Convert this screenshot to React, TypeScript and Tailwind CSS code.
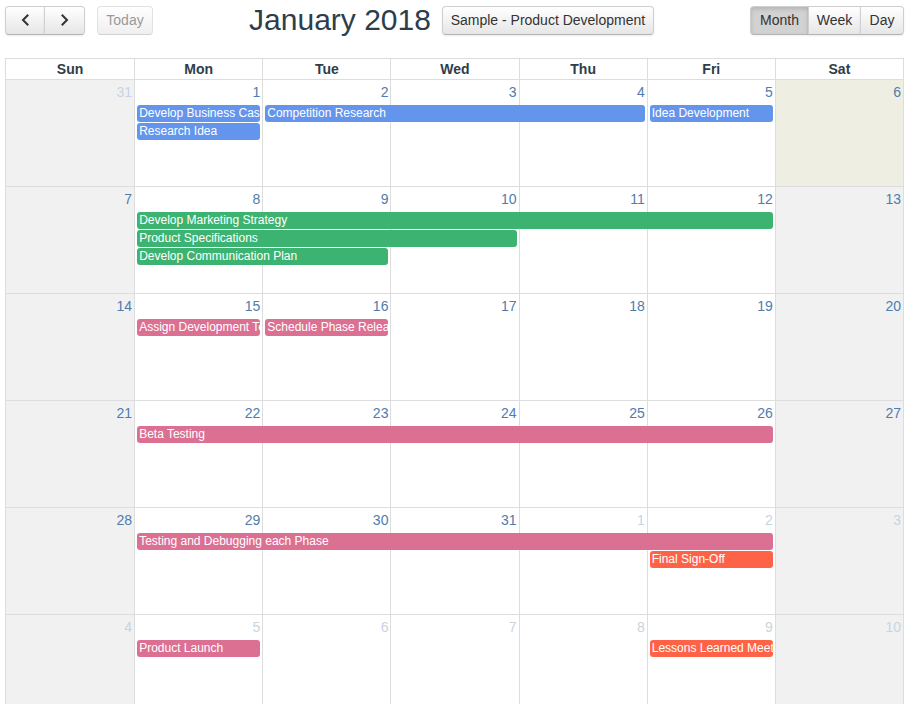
import React from "react";

type Ev = { title: string; start: number; span: number; row: number; color: string };
type Day = { n: number; other?: boolean; today?: boolean };
type Week = { days: Day[]; events: Ev[] };

const BLUE = "bg-[#6495ed]";
const GREEN = "bg-[#3cb371]";
const PINK = "bg-[#db7093]";
const ORANGE = "bg-[#ff6347]";

const colStart = ["", "col-start-1", "col-start-2", "col-start-3", "col-start-4", "col-start-5", "col-start-6", "col-start-7"];
const colSpan = ["", "col-span-1", "col-span-2", "col-span-3", "col-span-4", "col-span-5", "col-span-6", "col-span-7"];
const rowStart = ["", "row-start-1", "row-start-2", "row-start-3", "row-start-4", "row-start-5"];

const d = (n: number, other = false, today = false): Day => ({ n, other, today });

const weeks: Week[] = [
  {
    days: [d(31, true), d(1), d(2), d(3), d(4), d(5), d(6, false, true)],
    events: [
      { title: "Develop Business Case", start: 2, span: 1, row: 2, color: BLUE },
      { title: "Competition Research", start: 3, span: 3, row: 2, color: BLUE },
      { title: "Idea Development", start: 6, span: 1, row: 2, color: BLUE },
      { title: "Research Idea", start: 2, span: 1, row: 3, color: BLUE },
    ],
  },
  {
    days: [d(7), d(8), d(9), d(10), d(11), d(12), d(13)],
    events: [
      { title: "Develop Marketing Strategy", start: 2, span: 5, row: 2, color: GREEN },
      { title: "Product Specifications", start: 2, span: 3, row: 3, color: GREEN },
      { title: "Develop Communication Plan", start: 2, span: 2, row: 4, color: GREEN },
    ],
  },
  {
    days: [d(14), d(15), d(16), d(17), d(18), d(19), d(20)],
    events: [
      { title: "Assign Development Team", start: 2, span: 1, row: 2, color: PINK },
      { title: "Schedule Phase Release", start: 3, span: 1, row: 2, color: PINK },
    ],
  },
  {
    days: [d(21), d(22), d(23), d(24), d(25), d(26), d(27)],
    events: [{ title: "Beta Testing", start: 2, span: 5, row: 2, color: PINK }],
  },
  {
    days: [d(28), d(29), d(30), d(31), d(1, true), d(2, true), d(3, true)],
    events: [
      { title: "Testing and Debugging each Phase", start: 2, span: 5, row: 2, color: PINK },
      { title: "Final Sign-Off", start: 6, span: 1, row: 3, color: ORANGE },
    ],
  },
  {
    days: [d(4, true), d(5, true), d(6, true), d(7, true), d(8, true), d(9, true), d(10, true)],
    events: [
      { title: "Product Launch", start: 2, span: 1, row: 2, color: PINK },
      { title: "Lessons Learned Meeting", start: 6, span: 1, row: 2, color: ORANGE },
    ],
  },
];

const dayNames = ["Sun", "Mon", "Tue", "Wed", "Thu", "Fri", "Sat"];

const btn =
  "h-[29px] px-[10px] text-[14px] leading-none text-[#333] border border-[#cfcfcf] border-b-[#b3b3b3] bg-linear-to-b from-white to-[#e6e6e6] shadow-[inset_0_1px_0_rgba(255,255,255,0.2),0_1px_2px_rgba(0,0,0,0.08)] flex items-center justify-center whitespace-nowrap";

function Chevron({ dir }: { dir: "left" | "right" }) {
  return (
    <svg width="9" height="12" viewBox="0 0 9 12" fill="none">
      <path
        d={dir === "left" ? "M6.5 1.5 L2 6 L6.5 10.5" : "M2.5 1.5 L7 6 L2.5 10.5"}
        stroke="#333"
        strokeWidth="2"
        strokeLinecap="square"
      />
    </svg>
  );
}

function Toolbar() {
  return (
    <div className="flex justify-between items-center mt-[5px]">
      <div className="flex items-center">
        <div className="flex">
          <button className={`${btn} w-[40px] rounded-l-[4px]`}>
            <Chevron dir="left" />
          </button>
          <button className={`${btn} w-[41px] rounded-r-[4px] -ml-px`}>
            <Chevron dir="right" />
          </button>
        </div>
        <button className={`${btn} ml-[12px] w-[56px] rounded-[4px] opacity-60 shadow-none text-[#555]`}>Today</button>
      </div>
      <div className="flex items-center">
        <h2 className="text-[30px] leading-none text-[#2c3e4c] m-0">January 2018</h2>
        <button className={`${btn} ml-[11px] w-[212px] rounded-[4px] px-0`}>Sample - Product Development</button>
      </div>
      <div className="flex">
        <button className={`${btn} w-[59px] rounded-l-[4px] bg-none bg-[#d2d2d2] shadow-[inset_0_2px_4px_rgba(0,0,0,0.15),0_1px_2px_rgba(0,0,0,0.05)]`}>
          Month
        </button>
        <button className={`${btn} w-[53px] -ml-px`}>Week</button>
        <button className={`${btn} w-[44px] rounded-r-[4px] -ml-px`}>Day</button>
      </div>
    </div>
  );
}

function WeekRow({ week, last }: { week: Week; last: boolean }) {
  return (
    <div
      className={`grid grid-cols-7 grid-rows-[24px_18px_18px_18px_1fr] h-[107px] ${last ? "" : "border-b border-[#ddd]"}`}
    >
      {week.days.map((day, i) => {
        const weekend = i === 0 || i === 6;
        const bg = day.today ? "bg-[#efeee2]" : weekend ? "bg-[#f1f1f1]" : "bg-white";
        return (
          <div
            key={i}
            className={`${colStart[i + 1]} row-start-1 row-span-5 ${bg} ${i > 0 ? "border-l border-[#ddd]" : ""}`}
          >
            <div
              className={`text-right pr-[2px] pt-[2px] text-[14px] leading-[20px] ${
                day.other ? "text-[#c7d4e2]" : "text-[#4f7cae]"
              }`}
            >
              {day.n}
            </div>
          </div>
        );
      })}
      {week.events.map((ev, i) => (
        <div
          key={`e${i}`}
          className={`${colStart[ev.start]} ${colSpan[ev.span]} ${rowStart[ev.row]} mt-[1px] ml-[3px] mr-[2px] h-[17px] rounded-[3px] ${ev.color} overflow-hidden whitespace-nowrap text-white text-[12px] leading-[17px] pl-[2px]`}
        >
          {ev.title}
        </div>
      ))}
    </div>
  );
}

export default function App() {
  return (
    <div className="w-[910px] h-[704px] overflow-hidden bg-white px-[5px] font-['Liberation_Sans',Arial,sans-serif]">
      <div className="w-[899px]">
        <Toolbar />
      </div>
      <div className="mt-[23px] w-[899px] border border-[#ddd]">
        <div className="grid grid-cols-7 border-b border-[#ddd]">
          {dayNames.map((n, i) => (
            <div
              key={n}
              className={`text-center text-[14px] font-bold leading-[20px] text-[#2e3d4a] ${i > 0 ? "border-l border-[#ddd]" : ""}`}
            >
              {n}
            </div>
          ))}
        </div>
        {weeks.map((w, i) => (
          <WeekRow key={i} week={w} last={i === weeks.length - 1} />
        ))}
      </div>
    </div>
  );
}
